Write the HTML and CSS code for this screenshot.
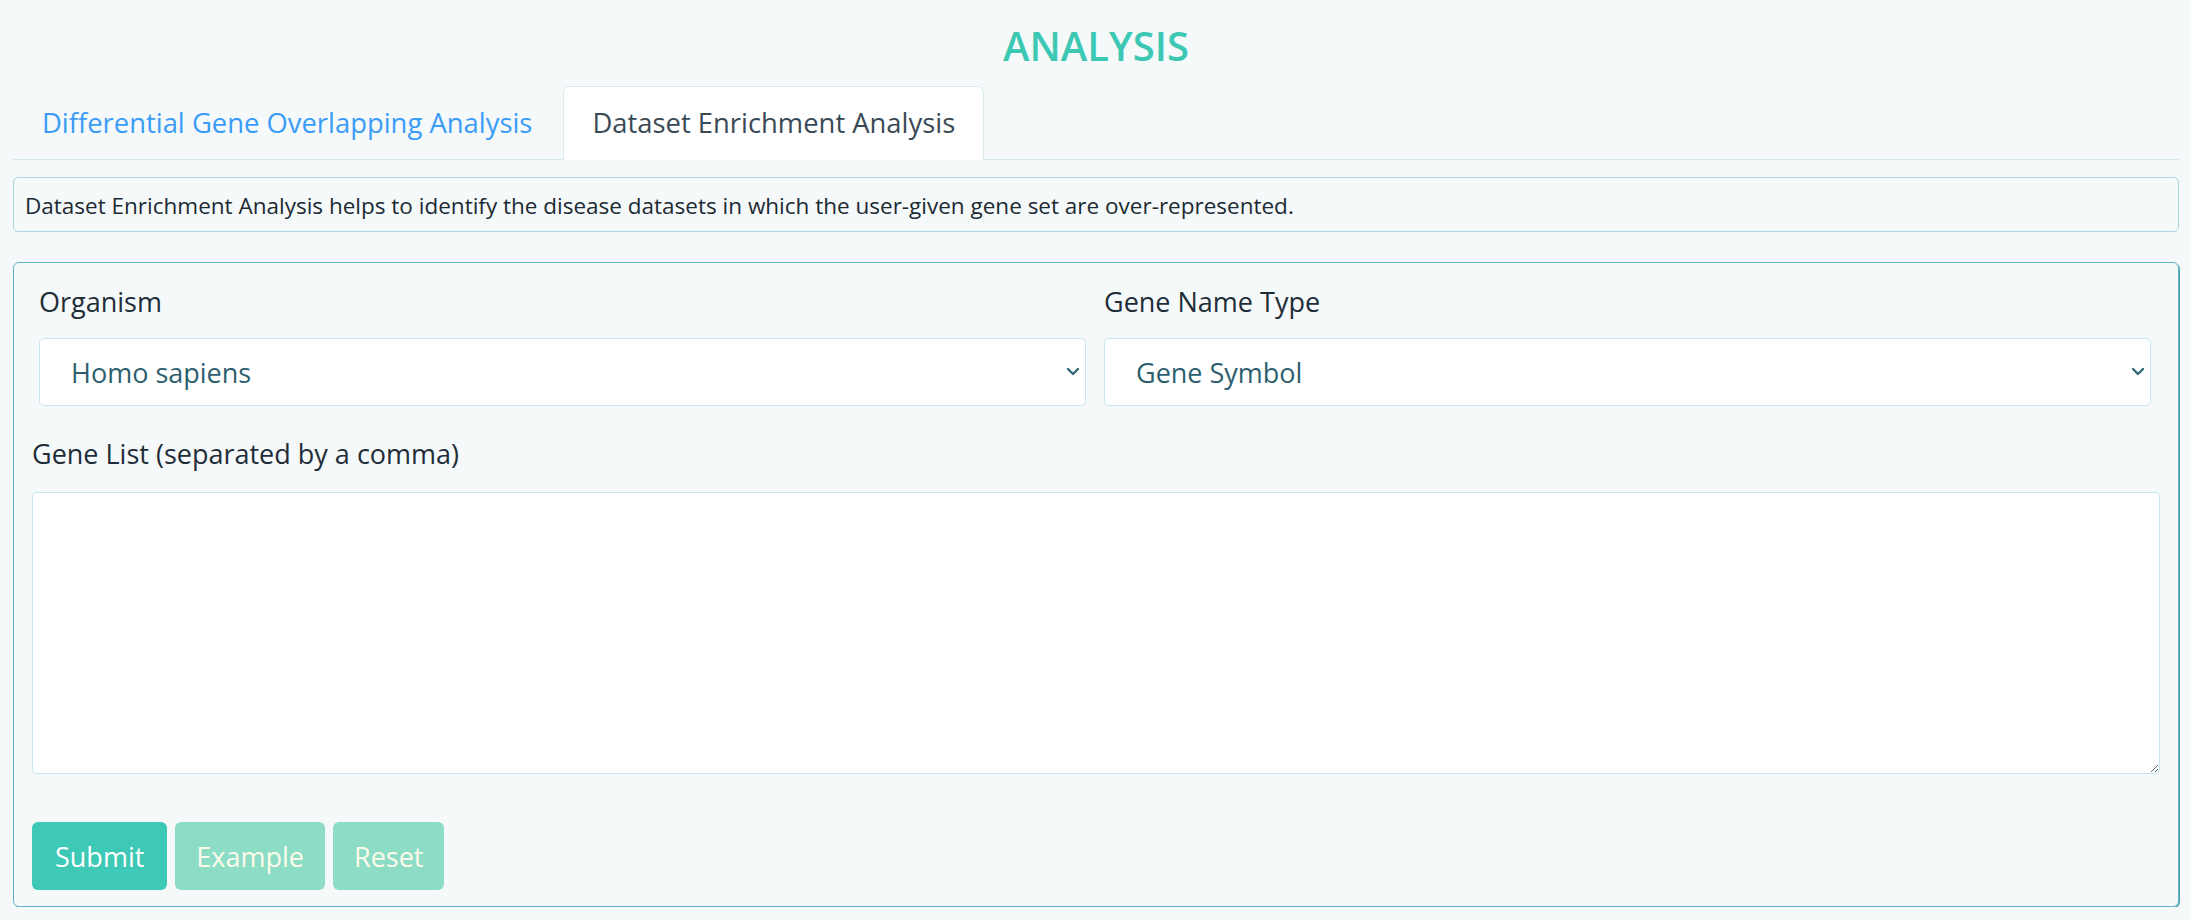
FILE: index.html
```html
<!DOCTYPE html>
<html lang="en">
<head>
    <meta charset="UTF-8">
    <meta name="viewport" content="width=device-width, initial-scale=1.0">
    <title>Analysis</title>
    <link rel="stylesheet" href="styles.css">
</head>
<body>
    <section class="page">
        <h2 class="title">ANALYSIS</h2>

        <ul class="tabs">
            <li><a class="tab" href="#">Differential Gene Overlapping Analysis</a></li>
            <li><a class="tab active" href="#">Dataset Enrichment Analysis</a></li>
        </ul>

        <div class="intro">Dataset Enrichment Analysis helps to identify the disease datasets in which the user-given gene set are over-represented.</div>

        <form class="card">
            <div class="form-row">
                <div class="form-group">
                    <label for="organism">Organism</label>
                    <div class="select-wrap">
                        <select id="organism" class="form-control">
                            <option>Homo sapiens</option>
                            <option>Mus musculus</option>
                        </select>
                        <svg class="chevron" width="14" height="9" viewBox="0 0 14 9"><path d="M2 2 L7 7 L12 2" fill="none" stroke="#2f6a77" stroke-width="2.4" stroke-linecap="round" stroke-linejoin="round"/></svg>
                    </div>
                </div>
                <div class="form-group">
                    <label for="nametype">Gene Name Type</label>
                    <div class="select-wrap">
                        <select id="nametype" class="form-control">
                            <option>Gene Symbol</option>
                            <option>Entrez ID</option>
                        </select>
                        <svg class="chevron" width="14" height="9" viewBox="0 0 14 9"><path d="M2 2 L7 7 L12 2" fill="none" stroke="#2f6a77" stroke-width="2.4" stroke-linecap="round" stroke-linejoin="round"/></svg>
                    </div>
                </div>
            </div>

            <div class="form-group wide">
                <label for="genes">Gene List (separated by a comma)</label>
                <textarea id="genes" class="form-control"></textarea>
            </div>

            <div class="actions">
                <button type="button" class="btn">Submit</button>
                <button type="button" class="btn faded">Example</button>
                <button type="button" class="btn faded">Reset</button>
            </div>
        </form>
    </section>
</body>
</html>
```

FILE: styles.css
```css
* {
    box-sizing: border-box;
}

body {
    margin: 0;
    padding: 0;
    background-color: #f5f9fa;
    font-family: "Open Sans", "Liberation Sans", sans-serif;
    font-size: 27px;
    color: #1f2d38;
}

.page {
    padding: 22px 12px 0 13px;
}

.title {
    margin: 0;
    text-align: center;
    font-size: 40px;
    line-height: 48px;
    font-weight: 600;
    color: #3dc8b4;
}

/* tabs */
.tabs {
    display: flex;
    margin: 16px 0 0;
    padding: 0;
    list-style: none;
    border-bottom: 1px solid #d8e9ee;
}

.tab {
    display: block;
    margin-bottom: -1px;
    margin-right: 2px;
    padding: 16px 28px;
    font-size: 27.4px;
    line-height: 40px;
    border: 1px solid transparent;
    border-radius: 6px 6px 0 0;
    color: #3a9cf6;
    text-decoration: none;
}

.tab.active {
    background-color: #fff;
    border-color: #dbeaef #dbeaef #fff;
    color: #3a4a55;
}

.intro {
    margin-top: 17px;
    padding: 12px 11px 9px;
    font-size: 22.5px;
    line-height: 32px;
    border: 1px solid #a9d5dc;
    border-radius: 5px;
    color: #1c2a33;
}

/* form card */
.card {
    margin-top: 30px;
    padding: 19px 18px 16px;
    border: 1px solid #5db5c3;
    border-radius: 6px;
    box-shadow: 1px 1px 0 #4f9fac;
}

.form-row {
    display: grid;
    grid-template-columns: 1fr 1fr;
    gap: 18px;
    margin: 0 9px 28px 7px;
}

.form-group label {
    display: block;
    margin-bottom: 16px;
    line-height: 40px;
}

.form-group.wide label {
    margin-bottom: 18px;
}

.form-control {
    display: block;
    width: 100%;
    background-color: #fff;
    border: 1px solid #c4e7ed;
    border-radius: 5px;
    font-family: inherit;
    font-size: 27px;
    outline: 0;
}

.select-wrap {
    position: relative;
}

select.form-control {
    height: 68px;
    padding: 0 40px 0 31px;
    color: #2e5f6f;
    appearance: none;
    -webkit-appearance: none;
}

.chevron {
    position: absolute;
    right: 6px;
    top: 29px;
    pointer-events: none;
}

textarea.form-control {
    height: 282px;
    resize: vertical;
}

.actions {
    display: flex;
    gap: 8px;
    margin-top: 48px;
}

.btn {
    height: 68px;
    padding: 0 23px;
    border: 0;
    border-radius: 6px;
    background-color: #3ec8b6;
    color: #fff;
    font-family: inherit;
    font-size: 27px;
}

.btn.faded {
    padding: 0 21px;
    background-color: #8cdcc6;
    color: #fdfbea;
}
```
